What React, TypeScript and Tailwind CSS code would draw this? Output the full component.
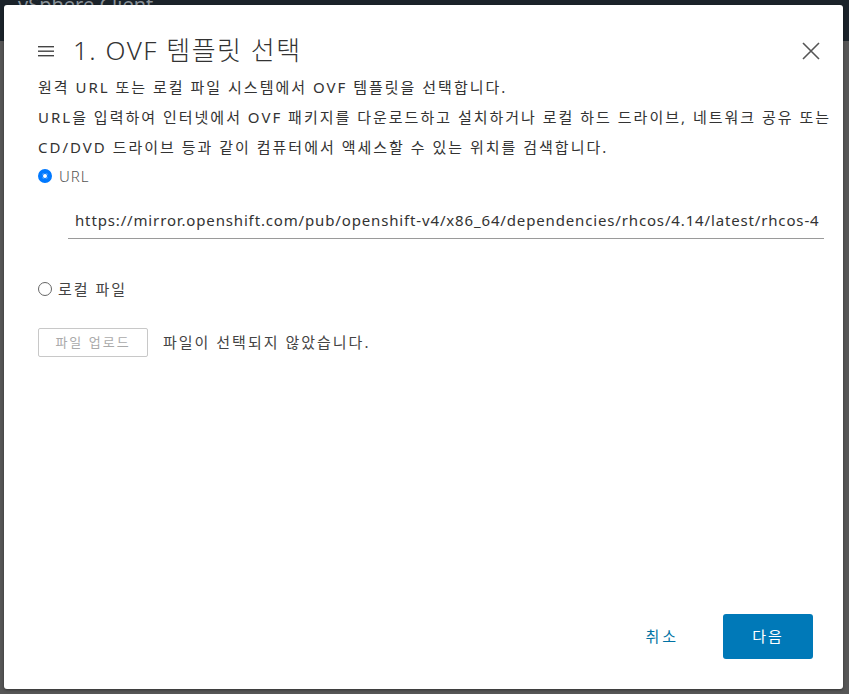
import React from "react";

export default function App() {
  const font = { fontFamily: '"Noto Sans", "Noto Sans CJK KR", sans-serif' };
  return (
    <div className="relative w-[849px] h-[694px] overflow-hidden bg-[#565656]" style={font}>
      {/* background app header */}
      <div className="h-[43px] bg-[#1b232a] flex items-start pl-[18px] text-[#8a9299] text-[20px] leading-[14px] -mt-[2px]">
        vSphere Client
      </div>

      {/* modal */}
      <div className="absolute left-[4px] top-[5px] w-[839px] h-[684px] bg-white rounded-[3px] flex flex-col shadow-[0_1px_3px_rgba(0,0,0,0.4)]">
        <div className="flex items-center pl-[34px] pr-[22px] pt-[26px] h-[64px]">
          <svg width="16" height="12" viewBox="0 0 16 12" className="mr-[19px] mt-[2px]">
            <rect x="0" y="1" width="16" height="1.4" fill="#444" />
            <rect x="0" y="5.5" width="16" height="1.4" fill="#444" />
            <rect x="0" y="10" width="16" height="1.4" fill="#444" />
          </svg>
          <div className="text-[26px] font-light text-[#333] leading-[30px] tracking-[1.5px]">1. OVF 템플릿 선택</div>
          <svg width="20" height="20" viewBox="0 0 20 20" className="ml-auto mt-[2px]">
            <path d="M2 2 L18 18 M18 2 L2 18" stroke="#555" strokeWidth="1.6" />
          </svg>
        </div>

        <div className="pl-[34px] pr-[4px] text-[15px] text-[#333] leading-[30px] mt-[3px] tracking-[2px]">
          <div className="whitespace-nowrap">원격 URL 또는 로컬 파일 시스템에서 OVF 템플릿을 선택합니다.</div>
          <div className="whitespace-nowrap">URL을 입력하여 인터넷에서 OVF 패키지를 다운로드하고 설치하거나 로컬 하드 드라이브, 네트워크 공유 또는</div>
          <div className="whitespace-nowrap">CD/DVD 드라이브 등과 같이 컴퓨터에서 액세스할 수 있는 위치를 검색합니다.</div>
        </div>

        <div className="pl-[34px] mt-[2px] flex items-center h-[24px]">
          <span className="w-[14px] h-[14px] rounded-full border-[4px] border-[#0079ff] bg-white box-border shadow-[0_0_0_1px_#0079ff_inset]" />
          <span className="ml-[7px] text-[15px] text-[#555] font-light tracking-[1px]">URL</span>
        </div>

        <div className="ml-[64px] mr-[19px] mt-[14px] border-b border-[#9a9a9a] h-[37px] flex items-center pl-[7px] text-[15px] text-[#333] whitespace-nowrap overflow-hidden tracking-[0.85px]">
          https://mirror.openshift.com/pub/openshift-v4/x86_64/dependencies/rhcos/4.14/latest/rhcos-4
        </div>

        <div className="pl-[34px] mt-[38px] flex items-center h-[24px]">
          <span className="w-[14px] h-[14px] rounded-full border border-[#666] bg-white" />
          <span className="ml-[6px] text-[15px] text-[#444] tracking-[2px]">로컬 파일</span>
        </div>

        <div className="pl-[34px] mt-[27px] flex items-center">
          <div className="w-[110px] h-[29px] border border-[#c8c8c8] rounded-[2px] flex items-center justify-center text-[13px] text-[#aaa] tracking-[2px]">
            파일 업로드
          </div>
          <span className="ml-[15px] text-[15px] text-[#444] tracking-[2px]">파일이 선택되지 않았습니다.</span>
        </div>

        <div className="mt-auto mb-[30px] flex items-center justify-end pr-[30px]">
          <span className="text-[15px] text-[#0072a3] mr-[44px] tracking-[3px]">취소</span>
          <div className="w-[90px] h-[45px] bg-[#0079b8] rounded-[3px] flex items-center justify-center text-white text-[15px] tracking-[2px]">
            다음
          </div>
        </div>
      </div>
    </div>
  );
}
